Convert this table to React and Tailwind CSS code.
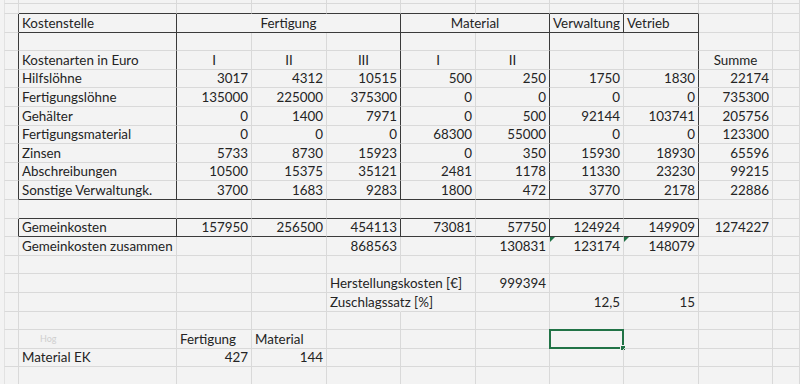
import React from "react";

// Excel-like sheet: column widths match the screenshot grid
const GRID =
  "grid grid-cols-[19px_158px_75px_75px_74px_75px_74px_74px_75px_74px_27px]";

const c = (t, a = "r", extra = {}) => ({ t, a, ...extra });
const empty = () => ({ t: "" });

const kosten = [
  ["Hilfslöhne", 3017, 4312, 10515, 500, 250, 1750, 1830, 22174],
  ["Fertigungslöhne", 135000, 225000, 375300, 0, 0, 0, 0, 735300],
  ["Gehälter", 0, 1400, 7971, 0, 500, 92144, 103741, 205756],
  ["Fertigungsmaterial", 0, 0, 0, 68300, 55000, 0, 0, 123300],
  ["Zinsen", 5733, 8730, 15923, 0, 350, 15930, 18930, 65596],
  ["Abschreibungen", 10500, 15375, 35121, 2481, 1178, 11330, 23230, 99215],
  ["Sonstige Verwaltungk.", 3700, 1683, 9283, 1800, 472, 3770, 2178, 22886],
];

const row = (h, cells, flags = {}) => ({ h, cells, ...flags });
const blank = (h, flags) => row(h, Array.from({ length: 11 }, empty), flags);
const dataRow = (h, r, flags) =>
  row(h, [empty(), c(r[0], "l"), ...r.slice(1).map((v) => c(String(v))), empty()], flags);

const rows = [
  blank("h-[4px]"),
  blank("h-[10px]", { line: true }),
  row(
    "h-[19px]",
    [
      empty(),
      c("Kostenstelle", "l"),
      c("Fertigung", "c", { span: 3 }),
      c("Material", "c", { span: 2 }),
      c("Verwaltung", "l"),
      c("Vetrieb", "l"),
      empty(),
      empty(),
    ],
    { box: true, head: true, line: true }
  ),
  blank("h-[18px]", { box: true }),
  row(
    "h-[19px]",
    [
      empty(),
      c("Kostenarten in Euro", "l"),
      c("I", "c"),
      c("II", "c"),
      c("III", "c"),
      c("I", "c"),
      c("II", "c"),
      empty(),
      empty(),
      c("Summe", "c"),
      empty(),
    ],
    { box: true }
  ),
  dataRow("h-[18px]", kosten[0], { box: true }),
  dataRow("h-[19px]", kosten[1], { box: true }),
  dataRow("h-[19px]", kosten[2], { box: true }),
  dataRow("h-[18px]", kosten[3], { box: true }),
  dataRow("h-[19px]", kosten[4], { box: true }),
  dataRow("h-[18px]", kosten[5], { box: true }),
  dataRow("h-[19px]", kosten[6], { box: true, line: true }),
  blank("h-[19px]", { line: true }),
  dataRow(
    "h-[18px]",
    ["Gemeinkosten", 157950, 256500, 454113, 73081, 57750, 124924, 149909, 1274227],
    { box: true, line: true }
  ),
  row("h-[19px]", [
    empty(),
    c("Gemeinkosten zusammen", "l"),
    empty(),
    empty(),
    c("868563"),
    empty(),
    c("130831"),
    c("123174", "r", { flag: true }),
    c("148079", "r", { flag: true }),
    empty(),
    empty(),
  ]),
  blank("h-[18px]"),
  row(
    "h-[19px]",
    [
      empty(),
      empty(),
      empty(),
      empty(),
      c("Herstellungskosten [€]", "l"),
      empty(),
      c("999394"),
      empty(),
      empty(),
      empty(),
      empty(),
    ],
    { hideE: true }
  ),
  row(
    "h-[19px]",
    [
      empty(),
      empty(),
      empty(),
      empty(),
      c("Zuschlagssatz [%]", "l"),
      empty(),
      empty(),
      c("12,5"),
      c("15"),
      empty(),
      empty(),
    ],
    { hideE: true }
  ),
  blank("h-[18px]"),
  row("h-[19px]", [
    empty(),
    c("Hog", "l", { faint: true }),
    c("Fertigung", "l"),
    c("Material", "l"),
    empty(),
    empty(),
    empty(),
    { t: "", selected: true },
    empty(),
    empty(),
    empty(),
  ]),
  row("h-[18px]", [
    empty(),
    c("Material EK", "l"),
    c("427"),
    c("144"),
    ...Array.from({ length: 7 }, empty),
  ]),
  blank("h-[19px]"),
];

function rightClass(r, col) {
  if (r.box && [0, 1, 4, 6, 8].includes(col)) return "border-r-[#3a3a3a]";
  if (r.head && col === 7) return "border-r-[#3a3a3a]";
  if (r.hideE && col === 4) return "border-r-[#f3f3f3]";
  return "border-r-[#d9d9d9]";
}

function bottomClass(r, col) {
  if (r.line && col >= 1 && col <= 8) return "border-b-[#3a3a3a]";
  return "border-b-[#d9d9d9]";
}

function Cell({ cell, r, col }) {
  const span = cell.span || 1;
  const end = col + span - 1;
  const justify =
    cell.a === "c" ? "justify-center" : cell.a === "l" ? "justify-start" : "justify-end";
  return (
    <div
      className={`relative flex items-end whitespace-nowrap overflow-visible px-[3px] border-r border-b ${justify} ${rightClass(
        r,
        end
      )} ${bottomClass(r, col)} ${span === 3 ? "col-span-3" : span === 2 ? "col-span-2" : ""} ${
        col === 0 ? "border-l border-l-[#e2e2e2] ml-[4px]" : ""
      }`}
    >
      {cell.faint ? (
        <span className="pl-[18px] pb-[3px] text-[9px] leading-[12px] text-[#cfcfcf]">
          {cell.t}
        </span>
      ) : (
        <span className="leading-[16px] pb-[1px]">{cell.t}</span>
      )}
      {cell.flag && (
        <span className="absolute left-0 top-0 h-0 w-0 border-t-[5px] border-r-[5px] border-t-[#1e7145] border-r-transparent" />
      )}
      {cell.selected && (
        <>
          <span className="absolute -left-[1px] -top-[1px] -right-[1px] -bottom-[1px] border-2 border-[#217346]" />
          <span className="absolute -right-[3px] -bottom-[3px] h-[6px] w-[6px] border border-[#f3f3f3] bg-[#217346]" />
        </>
      )}
    </div>
  );
}

export default function App() {
  return (
    <div className="h-[384px] w-[800px] overflow-hidden bg-[#f3f3f3] font-['Lato',sans-serif] text-[13.4px] text-[#242424]">
      {rows.map((r, i) => {
        let col = 0;
        return (
          <div key={i} className={`${GRID} ${r.h}`}>
            {r.cells.map((cell, j) => {
              const start = col;
              col += cell.span || 1;
              return <Cell key={j} cell={cell} r={r} col={start} />;
            })}
          </div>
        );
      })}
    </div>
  );
}
